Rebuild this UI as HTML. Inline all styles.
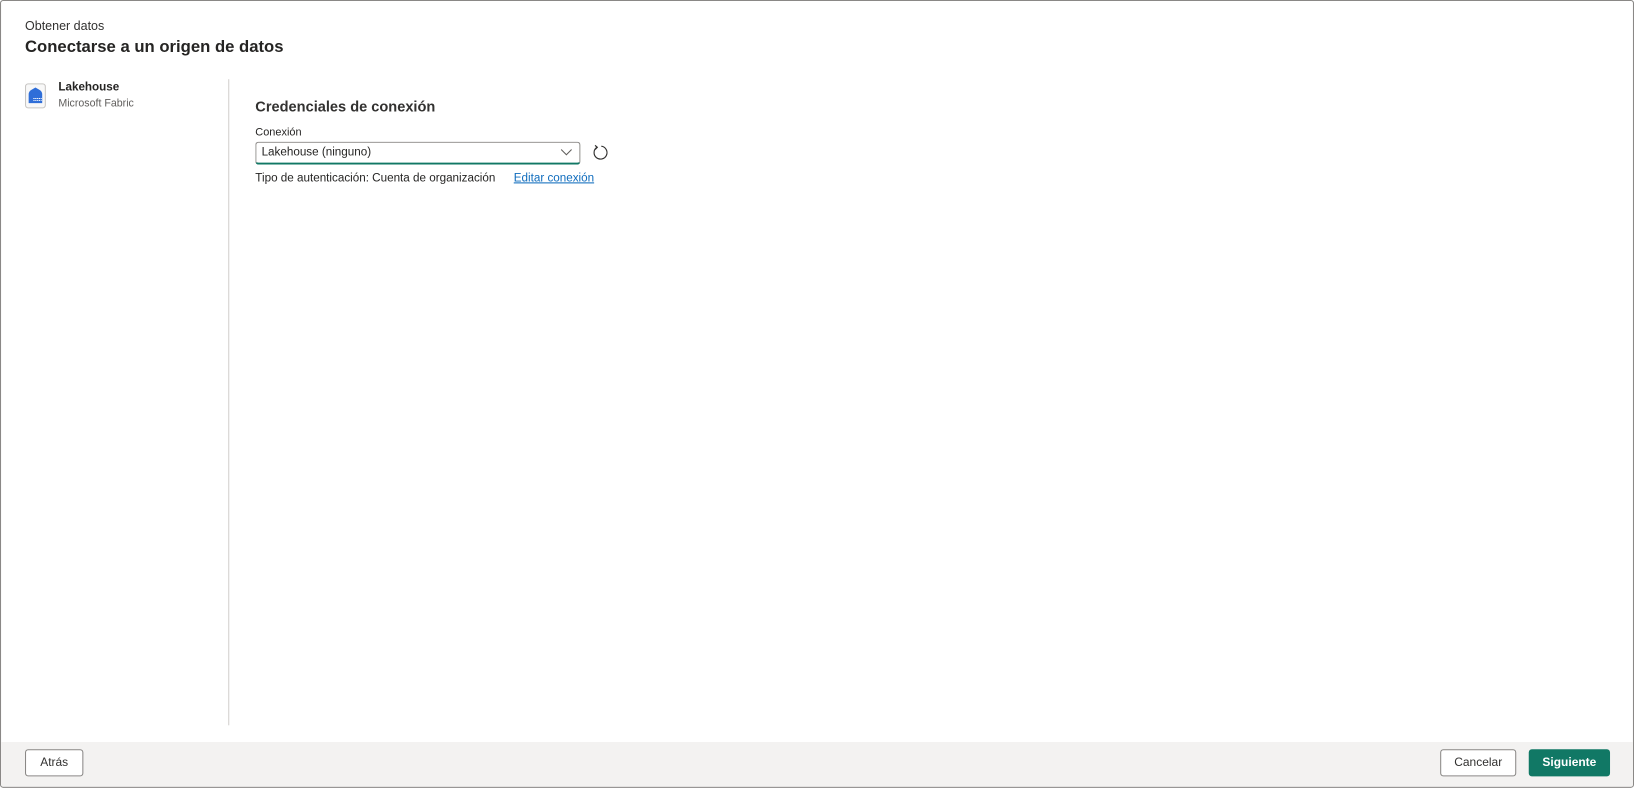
<!DOCTYPE html>
<html><head><meta charset="utf-8"><style>
html,body{margin:0;padding:0;width:1634px;height:788px;overflow:hidden;background:#fff;font-family:"Liberation Sans",sans-serif;color:#252423}
#w{position:absolute;left:0;top:0;width:1568px;height:756px;transform:scale(1.04209);transform-origin:0 0}
.dlg{position:absolute;left:0;top:0;width:1566px;height:754px;border:1px solid #8a8886;border-radius:3px;background:#fff;overflow:hidden}
.a{position:absolute;white-space:nowrap}
.btn{position:absolute;top:7px;height:26px;border:1px solid #8a8886;border-radius:3px;background:#fff;font-size:11.5px;line-height:24px;text-align:center;box-sizing:border-box;color:#323130}
</style></head><body><div id="w"><div class="dlg">
<div class="a" style="left:23px;top:17px;font-size:12px;color:#323130">Obtener datos</div>
<div class="a" style="left:23px;top:36px;font-size:16px;font-weight:600">Conectarse a un origen de datos</div>
<div class="a" style="left:23px;top:79px;width:20px;height:24px;border:1px solid #c8c6c4;border-radius:3px;background:#f8f8f8;box-sizing:border-box">
<svg width="18" height="22" viewBox="0 0 18 22"><path d="M2.5 18 V9.5 Q2.5 6.5 5.5 5 L9 3 L12.5 5 Q15.5 6.5 15.5 9.5 V18 Z" fill="#2f6ed8"/><path d="M7 13.5h8M7 15.5h8" stroke="#fff" stroke-width="0.9" stroke-dasharray="1.2 0.6"/></svg></div>
<div class="a" style="left:55px;top:77px;font-size:11.2px;font-weight:600">Lakehouse</div>
<div class="a" style="left:55px;top:93px;font-size:10.2px;color:#605e5c">Microsoft Fabric</div>
<div class="a" style="left:218px;top:75px;width:1px;height:620px;background:#d2d0ce"></div>
<div class="a" style="left:244px;top:93px;font-size:14px;font-weight:600;color:#323130">Credenciales de conexión</div>
<div class="a" style="left:244px;top:120px;font-size:10.5px">Conexión</div>
<div class="a" style="left:244px;top:135px;width:312px;height:22px;border:1px solid #8a8886;border-bottom:2px solid #117865;border-radius:3px;box-sizing:border-box;font-size:11.2px;line-height:19px;padding-left:5px">Lakehouse (ninguno)
<svg style="position:absolute;right:7px;top:6px" width="11" height="7" viewBox="0 0 11 7"><path d="M0.5 0.5 L5.5 5.5 L10.5 0.5" fill="none" stroke="#605e5c" stroke-width="1"/></svg></div>
<svg class="a" style="left:567px;top:137px" width="17" height="17" viewBox="0 0 17 17"><path d="M5 3.2 A6.2 6.2 0 1 0 9 2.3" fill="none" stroke="#323130" stroke-width="1.1"/><path d="M3 1.5 L5.2 3.3 L3.2 5.4" fill="none" stroke="#323130" stroke-width="1.1"/></svg>
<div class="a" style="left:244px;top:164px;font-size:11.2px">Tipo de autenticación: Cuenta de organización</div>
<div class="a" style="left:492px;top:164px;font-size:11.2px;color:#0f6cbd;text-decoration:underline">Editar conexión</div>
<div class="a" style="left:0;top:711px;width:1566px;height:43px;background:#f3f2f1">
<div class="btn" style="left:23px;width:56px">Atrás</div>
<div class="btn" style="left:1381px;width:73px">Cancelar</div>
<div class="btn" style="left:1466px;width:78px;background:#117865;border-color:#117865;color:#fff;font-weight:600">Siguiente</div>
</div>
</div></div></body></html>
